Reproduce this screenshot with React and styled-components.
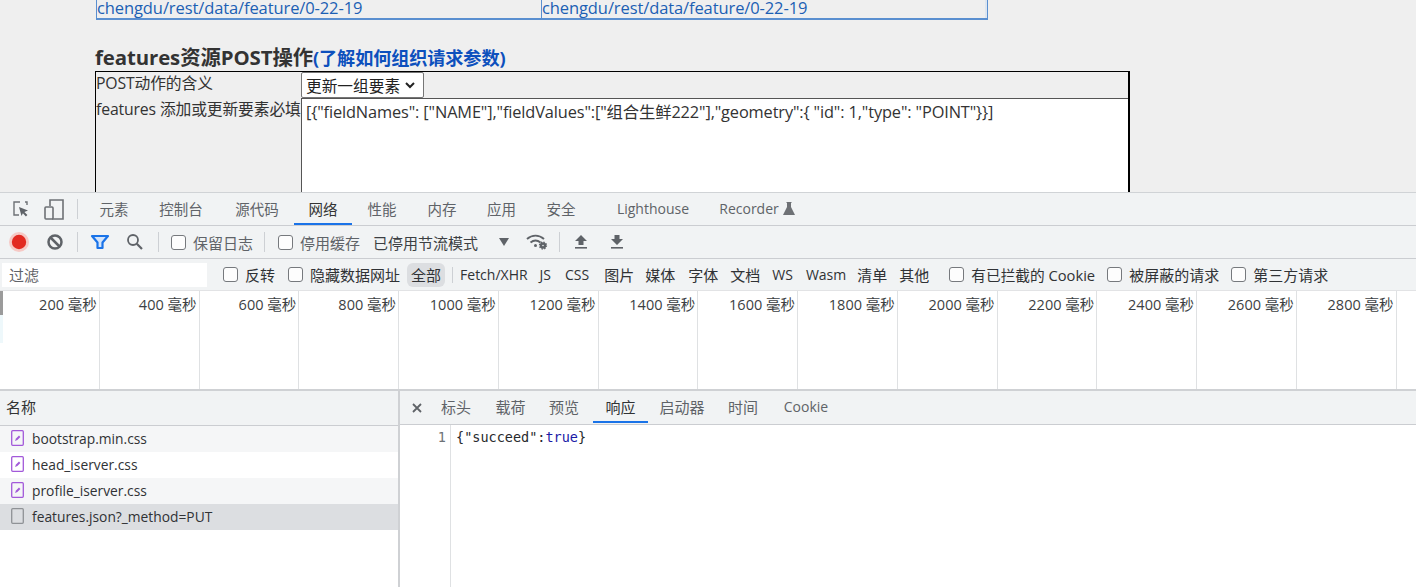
import React from "react";
import styled, { createGlobalStyle } from "styled-components";

const Global = createGlobalStyle`
  html, body { margin: 0; padding: 0; height: 587px; overflow: hidden; background: #fff; }
  body { font-family: "Open Sans", "Noto Sans CJK SC", sans-serif; }
  * { box-sizing: border-box; }
`;
const Shell = styled.div`width: 1416px; height: 587px; display: flex; flex-direction: column; overflow: hidden; font-family: "Open Sans", "Noto Sans CJK SC", sans-serif;`;
const PageArea = styled.div`height: 192px; flex: none; background: #efefef; padding-left: 95px; overflow: hidden; color: #333;`;
const LinkTable = styled.div`width: 892px; height: 20px; margin-left: 1px; display: flex; border: 1px solid #5a8fd0; border-top: 0; border-bottom-width: 2px; box-shadow: inset -2px 0 0 #dde6f0;`;
const LinkCell = styled.div`width: ${p => p.$w}px; height: 18px; font-size: 16.5px; line-height: 15px; color: #1c5fb4; border-right: ${p => p.$line ? "1px solid #5a8fd0" : "0"}; padding-left: 0; white-space: nowrap; letter-spacing: -.1px;`;
const Heading = styled.h3`margin: 24px 0 0; height: 27px; font-size: 20.4px; line-height: 26px; font-weight: 700; color: #333; white-space: nowrap; letter-spacing: -.1px;`;
const HeadingLink = styled.span`color: #0d50bd; font-size: 18.150px;`;
const FormTable = styled.div`width: 1035px; height: 140px; border: 1px solid #000; border-bottom: 0; border-right-width: 2px; display: grid; grid-template-columns: 205px 1fr; grid-template-rows: 26px 1fr;`;
const Label = styled.div`font-size: 15.8px; line-height: 23px; padding-left: 0; color: #333; white-space: nowrap; letter-spacing: -.15px;`;
const SelectBox = styled.div`width: 123px; height: 26px; background: #fff; border: 1px solid #767676; border-radius: 2px; display: flex; align-items: center; padding-left: 4px; gap: 5px; font-size: 15.7px; color: #222; white-space: nowrap;`;
const TextBox = styled.div`background: #fff; border: 1px solid #555; border-right: 0; border-bottom: 0; font-size: 16.35px; line-height: 24px; padding: 1px 4px; color: #333; white-space: nowrap; letter-spacing: -.13px;`;

const DevTools = styled.div`flex: 1; display: flex; flex-direction: column; background: #f1f3f4; color: #4a4d51; font-size: 14px; min-height: 0;`;
const MainTabs = styled.div`height: 34px; flex: none; display: flex; align-items: stretch; border-top: 1px solid #d0d3d6; border-bottom: 1px solid #cbcdd1; padding-left: 10px;`;
const IconSlot = styled.div`width: ${p => p.$w || 24}px; margin-left: ${p => p.$ml || 0}px; display: flex; align-items: center; justify-content: center; flex: none;`;
const Sep = styled.div`width: 1px; height: ${p => p.$h || 20}px; background: #cdd0d4; align-self: center; flex: none; margin: ${p => p.$m || "0 8px"};`;
const MainTab = styled.div`
  height: 32px; flex: none; width: ${p => p.$w}px; display: flex; align-items: center; justify-content: center;
  margin-left: ${p => p.$ml || 0}px; color: ${p => p.$on ? "#333" : "#5f6368"}; font-size: ${p => p.$fs || 14.5}px; gap: 4px;
  border-bottom: 2px solid ${p => p.$on ? "#1a73e8" : "transparent"}; margin-bottom: -1px; white-space: nowrap;
`;
const Toolbar = styled.div`height: 33px; flex: none; display: flex; align-items: center; border-bottom: 1px solid #cbcdd1; padding-left: 7px; font-size: 15px; color: #5f6368; white-space: nowrap;`;
const Check = styled.span`width: 15px; height: 15px; flex: none; border: 1px solid #76797d; border-radius: 3px; background: #fdfdfd; margin-right: 7px;`;
const ThrottleLabel = styled.span`margin-left: 13px; color: #3c3f43;`;
const FilterBar = styled.div`height: 31px; flex: none; display: flex; align-items: center; color: #333; white-space: nowrap; padding-left: 2px;`;
const FilterInput = styled.div`width: 205px; height: 24px; background: #fff; color: #5f6368; font-size: 15px; line-height: 24px; padding-left: 7px; flex: none; margin-right: 16px;`;
const Chip = styled.span`
  height: 24px; line-height: 24px; padding: 0 ${p => p.$on ? "4px" : "0"}; margin-right: ${p => p.$mr}px; border-radius: 6px;
  background: ${p => p.$on ? "#dcdee1" : "transparent"}; font-size: ${p => p.$fs || 15}px; color: #303235; flex: none;
`;
const Timeline = styled.div`
  height: 101px; flex: none; background: #fff; display: flex; border-top: 1px solid #e2e3e5; border-bottom: 2px solid #cfd1d4; overflow: hidden; position: relative;
  &::before { content: ""; position: absolute; left: 0; top: 0; width: 3px; height: 24px; background: #9b9b9b; }
  &::after { content: ""; position: absolute; left: 0; top: 24px; width: 3px; height: 28px; background: #eef8fb; }
`;
const Tick = styled.div`flex: 0 0 99.76px; height: 100%; border-right: 1px solid #dfe1e3; text-align: right; padding: 4px 2px 0 0; font-size: 14.500px; line-height: 20px; color: #3c3f43; white-space: nowrap;`;
const Split = styled.div`flex: 1; display: grid; grid-template-columns: 400px 1fr; min-height: 0; background: #fff;`;
const NameCol = styled.div`border-right: 2px solid #cfd1d4; display: flex; flex-direction: column; background: #fff;`;
const NameHead = styled.div`height: 35px; flex: none; background: #f1f3f4; border-bottom: 1px solid #cbcdd1; font-size: 15px; line-height: 33px; padding-left: 6px; color: #333;`;
const Row = styled.div`height: 26px; flex: none; display: flex; align-items: center; gap: 8px; padding: 0 0 2px 11px; background: ${p => p.$sel ? "#dcdee1" : p.$alt ? "#f5f6f7" : "#fff"}; font-size: 13.8px; color: #303235;`;
const DetailCol = styled.div`display: flex; flex-direction: column; min-width: 0;`;
const DetailTabs = styled.div`height: 34px; flex: none; background: #f1f3f4; border-bottom: 1px solid #cbcdd1; display: flex; align-items: stretch; padding-left: 11px;`;
const DetailTab = styled.div`
  flex: none; width: ${p => p.$w}px; height: 31px; margin-left: ${p => p.$ml || 0}px; padding-bottom: 1px; margin-top: 1px; display: flex; align-items: center; justify-content: center; font-size: ${p => p.$fs || 15}px;
  color: ${p => p.$on ? "#303235" : "#5f6368"}; border-bottom: 2px solid ${p => p.$on ? "#1a73e8" : "transparent"};
`;
const CodeArea = styled.div`flex: 1; display: flex; font-family: "DejaVu Sans Mono", monospace; font-size: 13.5px; line-height: 24px;`;
const Gutter = styled.div`width: 51px; flex: none; border-right: 1px solid #dfe1e3; text-align: right; padding-right: 4px; color: #6e7276;`;
const Code = styled.div`padding-left: 5px; color: #27292c;`;
const Keyword = styled.span`color: #1a1aa6;`;

const Inspect = () => (
  <svg width="20" height="20" viewBox="0 0 20 20" fill="none">
    <path d="M9 3H3v13h5" stroke="#6e7175" strokeWidth="1.4" />
    <path d="M14 3h2v3" stroke="#6e7175" strokeWidth="1.4" />
    <path d="M8 8l9 3.5-3.6 1.4 3 3.2-1.5 1.4-3-3.2L10.500 17z" fill="#5f6368" />
  </svg>
);
const Device = () => (
  <svg width="22" height="22" viewBox="0 0 22 22" fill="none" stroke="#6e7175" strokeWidth="1.6">
    <path d="M7 8V2h13v19H9" />
    <rect x="2" y="9" width="8" height="12" rx="1" />
  </svg>
);
const Record = () => (
  <svg width="22" height="22" viewBox="0 0 22 22">
    <circle cx="11" cy="11" r="10" fill="#f6c9c5" />
    <circle cx="11" cy="11" r="7.200" fill="#e22a21" />
  </svg>
);
const Clear = () => (
  <svg width="18" height="18" viewBox="0 0 18 18" fill="none" stroke="#5f6368" strokeWidth="2.500">
    <circle cx="9" cy="9" r="6.500" />
    <path d="M4.500 4.500l9 9" />
  </svg>
);
const Funnel = () => (
  <svg width="20" height="18" viewBox="0 0 20 18" fill="#d5e5fb" stroke="#1a73e8" strokeWidth="2.200" strokeLinejoin="round">
    <path d="M2 3h16l-5.500 6.500V15h-5V9.500z" />
  </svg>
);
const Search = () => (
  <svg width="20" height="20" viewBox="0 0 20 20" fill="none" stroke="#5f6368" strokeWidth="1.800">
    <circle cx="8" cy="8" r="5" />
    <path d="M11.800 11.800L17 17" strokeWidth="2.200" />
  </svg>
);
const Wifi = () => (
  <svg width="22" height="16" viewBox="0 0 22 16" fill="none" stroke="#5f6368" strokeWidth="1.900">
    <path d="M1 5c5-4.500 12-4.500 17 0" />
    <path d="M4.500 8.500c3-2.500 7-2.500 10 0" />
    <circle cx="9.500" cy="11.500" r="1.500" fill="#5f6368" stroke="none" />
    <circle cx="17" cy="11.500" r="2" strokeWidth="2.400" />
    <circle cx="17" cy="11.500" r="3.500" strokeWidth="1.300" strokeDasharray="1.400 1.350" />
  </svg>
);
const UpArrow = () => (
  <svg width="14" height="16" viewBox="0 0 14 16" fill="#5f6368">
    <path d="M7 1l6 6H9.500v4h-5V7H1z" />
    <rect x="1" y="13" width="12" height="1.600" />
  </svg>
);
const DownArrow = () => (
  <svg width="14" height="16" viewBox="0 0 14 16" fill="#5f6368">
    <path d="M7 11L1 5h3.500V1h5v4H13z" />
    <rect x="1" y="13" width="12" height="1.600" />
  </svg>
);
const Triangle = () => (
  <svg width="10" height="8" viewBox="0 0 10 8" fill="#5f6368"><path d="M0 0h10L5 8z" /></svg>
);
const Flask = () => (
  <svg width="12" height="13" viewBox="0 0 12 13" fill="#6e7175"><path d="M3.500 0h5v1H8v4l4 8H0l4-8V1h-.5z" /></svg>
);
const Chevron = () => (
  <svg width="10" height="7" viewBox="0 0 10 7" fill="none" stroke="#222" strokeWidth="2"><path d="M1 1l4 4 4-4" /></svg>
);
const Close = () => (
  <svg width="10" height="10" viewBox="0 0 10 10" stroke="#5f6368" strokeWidth="1.800"><path d="M1 1l8 8M9 1l-8 8" /></svg>
);
const FileIcon = ({ css }) => (
  <svg width="13" height="16" viewBox="0 0 13 16" fill="none">
    <rect x=".7" y=".7" width="11.600" height="14.600" rx="1" stroke={css ? "#a259d9" : "#8f9296"} strokeWidth="1.300" />
    {css && <path d="M4 11l1-2.500 3-3 1.400 1.400-3 3z" fill="#a259d9" />}
  </svg>
);

const ticks = Array.from({ length: 14 }, (_, i) => (i + 1) * 200);
const files = [
  { name: "bootstrap.min.css", css: true, alt: true },
  { name: "head_iserver.css", css: true },
  { name: "profile_iserver.css", css: true, alt: true },
  { name: "features.json?_method=PUT", sel: true },
];

export default function App() {
  return (
    <Shell>
      <Global />
      <PageArea>
        <LinkTable>
          <LinkCell $w={445} $line>chengdu/rest/data/feature/0-22-19</LinkCell>
          <LinkCell $w={444}>chengdu/rest/data/feature/0-22-19</LinkCell>
        </LinkTable>
        <Heading>features资源POST操作<HeadingLink>(了解如何组织请求参数)</HeadingLink></Heading>
        <FormTable>
          <Label>POST动作的含义</Label>
          <div><SelectBox>更新一组要素 <Chevron /></SelectBox></div>
          <Label>features 添加或更新要素必填</Label>
          <TextBox>{'[{"fieldNames": ["NAME"],"fieldValues":["组合生鲜222"],"geometry":{ "id": 1,"type": "POINT"}}]'}</TextBox>
        </FormTable>
      </PageArea>
      <DevTools>
        <MainTabs>
          <IconSlot $w={22}><Inspect /></IconSlot>
          <IconSlot $w={28} $ml={8}><Device /></IconSlot>
          <Sep $m="0 8px 0 9px" />
          <MainTab $w={56}>元素</MainTab>
          <MainTab $w={78}>控制台</MainTab>
          <MainTab $w={74}>源代码</MainTab>
          <MainTab $w={58} $on>网络</MainTab>
          <MainTab $w={60}>性能</MainTab>
          <MainTab $w={60}>内存</MainTab>
          <MainTab $w={59}>应用</MainTab>
          <MainTab $w={60}>安全</MainTab>
          <MainTab $w={124} $fs={14}>Lighthouse</MainTab>
          <MainTab $w={78} $ml={3} $fs={14}>Recorder <Flask /></MainTab>
        </MainTabs>
        <Toolbar>
          <IconSlot $w={24}><Record /></IconSlot>
          <IconSlot $w={28} $ml={10}><Clear /></IconSlot>
          <Sep $m="0 0 0 8px" />
          <IconSlot $w={30} $ml={7}><Funnel /></IconSlot>
          <IconSlot $w={30} $ml={5}><Search /></IconSlot>
          <Sep $m="0 12px 0 8px" />
          <Check />保留日志
          <Sep $m="0 13px 0 11px" />
          <Check />停用缓存
          <ThrottleLabel>已停用节流模式</ThrottleLabel>
          <IconSlot $w={12} $ml={20}><Triangle /></IconSlot>
          <IconSlot $w={26} $ml={14}><Wifi /></IconSlot>
          <Sep $m="0 11px 0 9px" />
          <IconSlot $w={20}><UpArrow /></IconSlot>
          <IconSlot $w={20} $ml={16}><DownArrow /></IconSlot>
        </Toolbar>
        <FilterBar>
          <FilterInput>过滤</FilterInput>
          <Check />
          <Chip $mr={13}>反转</Chip>
          <Check />
          <Chip $mr={7}>隐藏数据网址</Chip>
          <Chip $on $mr={7}>全部</Chip>
          <Sep $h={16} $m="0 7px 0 0" />
          <Chip $fs={14} $mr={12}>Fetch/XHR</Chip>
          <Chip $fs={14} $mr={14}>JS</Chip>
          <Chip $fs={14} $mr={15}>CSS</Chip>
          <Chip $mr={11}>图片</Chip>
          <Chip $mr={13}>媒体</Chip>
          <Chip $mr={12}>字体</Chip>
          <Chip $mr={12}>文档</Chip>
          <Chip $fs={14} $mr={13}>WS</Chip>
          <Chip $fs={14} $mr={11}>Wasm</Chip>
          <Chip $mr={12}>清单</Chip>
          <Chip $mr={20}>其他</Chip>
          <Check />
          <Chip $fs={14.7} $mr={12}>有已拦截的 Cookie</Chip>
          <Check />
          <Chip $mr={12}>被屏蔽的请求</Chip>
          <Check />
          <Chip $mr={0}>第三方请求</Chip>
        </FilterBar>
        <Timeline>
          {ticks.map(t => <Tick key={t}>{t} 毫秒</Tick>)}
        </Timeline>
        <Split>
          <NameCol>
            <NameHead>名称</NameHead>
            {files.map(f => (
              <Row key={f.name} $alt={f.alt} $sel={f.sel}>
                <FileIcon css={f.css} />
                {f.name}
              </Row>
            ))}
          </NameCol>
          <DetailCol>
            <DetailTabs>
              <IconSlot $w={12}><Close /></IconSlot>
              <DetailTab $w={60} $ml={3}>标头</DetailTab>
              <DetailTab $w={49}>载荷</DetailTab>
              <DetailTab $w={58}>预览</DetailTab>
              <DetailTab $w={55} $on>响应</DetailTab>
              <DetailTab $w={68}>启动器</DetailTab>
              <DetailTab $w={54}>时间</DetailTab>
              <DetailTab $w={72} $fs={14}>Cookie</DetailTab>
            </DetailTabs>
            <CodeArea>
              <Gutter>1</Gutter>
              <Code>{'{"succeed":'}<Keyword>true</Keyword>{'}'}</Code>
            </CodeArea>
          </DetailCol>
        </Split>
      </DevTools>
    </Shell>
  );
}
